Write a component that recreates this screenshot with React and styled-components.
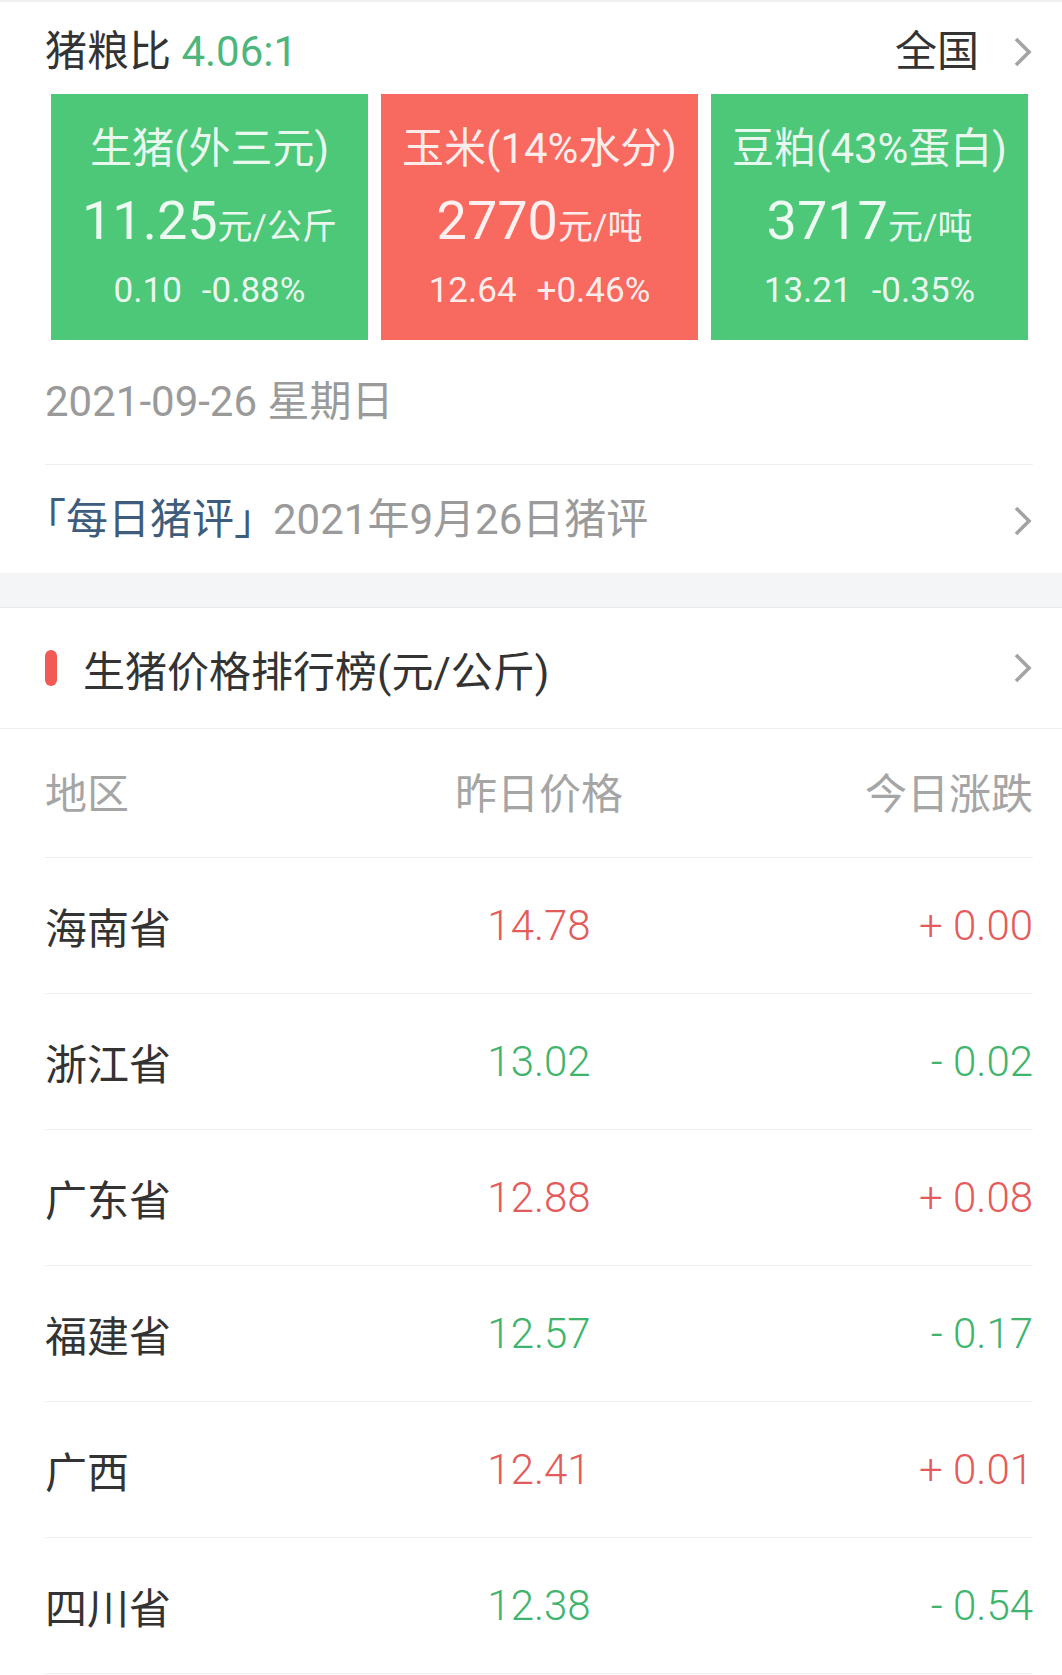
import React from 'react';
import styled, { createGlobalStyle } from 'styled-components';

const GlobalStyle = createGlobalStyle`
  body {
    margin: 0;
    background: #ffffff;
    font-family: Roboto, "Noto Sans CJK SC", sans-serif;
  }
`;

const cards = [
  { name: '生猪(外三元)', price: '11.25', unit: '元/公斤', diff: '0.10', pct: '-0.88%', tone: 'down' },
  { name: '玉米(14%水分)', price: '2770', unit: '元/吨', diff: '12.64', pct: '+0.46%', tone: 'up' },
  { name: '豆粕(43%蛋白)', price: '3717', unit: '元/吨', diff: '13.21', pct: '-0.35%', tone: 'down' },
];

const ranks = [
  { region: '海南省', price: '14.78', change: '+ 0.00', tone: 'up' },
  { region: '浙江省', price: '13.02', change: '- 0.02', tone: 'down' },
  { region: '广东省', price: '12.88', change: '+ 0.08', tone: 'up' },
  { region: '福建省', price: '12.57', change: '- 0.17', tone: 'down' },
  { region: '广西', price: '12.41', change: '+ 0.01', tone: 'up' },
  { region: '四川省', price: '12.38', change: '- 0.54', tone: 'down' },
];

const Chevron = ({ drop = 0 }) => (
  <ChevronIcon viewBox="0 0 20 32" width="20" height="32" $drop={drop}>
    <polyline points="3,3 16,16 3,29" fill="none" stroke="#a3a3a3" strokeWidth="3.6" />
  </ChevronIcon>
);

const App = () => {
  return (
    <Page>
      <GlobalStyle />
      <Summary>
        <TitleRow>
          <Title>
            猪粮比 <Ratio>4.06:1</Ratio>
          </Title>
          <RegionLink>
            全国
            <Chevron />
          </RegionLink>
        </TitleRow>

        <CardGrid>
          {cards.map((c) => (
            <PriceCard key={c.name} $tone={c.tone}>
              <CardTitle>{c.name}</CardTitle>
              <CardPrice>
                {c.price}
                <Unit>{c.unit}</Unit>
              </CardPrice>
              <CardChange>
                <span>{c.diff}</span>
                <span>{c.pct}</span>
              </CardChange>
            </PriceCard>
          ))}
        </CardGrid>

        <DateRow>2021-09-26 星期日</DateRow>

        <CommentRow>
          <span>
            <CommentTag>「每日猪评」</CommentTag>
            <CommentText>2021年9月26日猪评</CommentText>
          </span>
          <Chevron drop={12} />
        </CommentRow>
      </Summary>

      <Band />

      <RankHeader>
        <Pill />
        <RankTitle>生猪价格排行榜(元/公斤)</RankTitle>
        <Chevron />
      </RankHeader>

      <Table>
        <HeadRow>
          <Cell $align="start">地区</Cell>
          <Cell $align="center">昨日价格</Cell>
          <Cell $align="end">今日涨跌</Cell>
        </HeadRow>
        {ranks.map((r) => (
          <DataRow key={r.region}>
            <Cell $align="start">{r.region}</Cell>
            <Cell $align="center" $tone={r.tone}>{r.price}</Cell>
            <Cell $align="end" $tone={r.tone}>{r.change}</Cell>
          </DataRow>
        ))}
      </Table>
    </Page>
  );
};

// Styled Components
const Page = styled.div`
  width: 1062px;
  background: #ffffff;
  border-top: 2px solid #f0f0f0;
  overflow: hidden;
`;

const Summary = styled.section`
  padding: 0 29px 0 45px;
`;

const TitleRow = styled.div`
  display: flex;
  align-items: center;
  justify-content: space-between;
  height: 84px;
  padding-top: 8px;
`;

const Title = styled.div`
  font-size: 42px;
  line-height: 1;
  color: #333333;
`;

const Ratio = styled.span`
  color: #4db67d;
`;

const RegionLink = styled.div`
  display: flex;
  align-items: center;
  gap: 34px;
  font-size: 42px;
  line-height: 1;
  color: #333333;
`;

const ChevronIcon = styled.svg`
  display: block;
  flex-shrink: 0;
  margin-top: ${(p) => p.$drop}px;
`;

const CardGrid = styled.div`
  display: grid;
  grid-template-columns: repeat(3, 1fr);
  gap: 13px;
  height: 246px;
  margin: 0 5px 0 6px;
`;

const PriceCard = styled.div`
  display: flex;
  flex-direction: column;
  align-items: center;
  padding-top: 30px;
  background: ${(p) => (p.$tone === 'up' ? '#f86a60' : '#4cc878')};
  color: rgba(255, 255, 255, 0.9);
  white-space: nowrap;
`;

const CardTitle = styled.div`
  font-size: 42px;
  line-height: 50px;
`;

const CardPrice = styled.div`
  display: flex;
  align-items: baseline;
  margin-top: 17px;
  font-size: 54px;
  line-height: 60px;
`;

const Unit = styled.span`
  font-size: 35px;
`;

const CardChange = styled.div`
  display: flex;
  gap: 20px;
  margin-top: 13px;
  font-size: 35px;
  line-height: 40px;
`;

const DateRow = styled.div`
  display: flex;
  align-items: center;
  height: 114px;
  padding-bottom: 10px;
  font-size: 42px;
  color: #9a9a9a;
  border-bottom: 1px solid #eeeeee;
`;

const CommentRow = styled.div`
  display: flex;
  align-items: center;
  justify-content: space-between;
  height: 100px;
  padding-bottom: 8px;
  font-size: 42px;
`;

const CommentTag = styled.span`
  color: #3e5c7c;
  font-feature-settings: "halt";
  margin-right: 18px;
`;

const CommentText = styled.span`
  color: #9a9a9a;
`;

const Band = styled.div`
  height: 34px;
  background: #f4f5f7;
  border-bottom: 1px solid #eaeaea;
`;

const RankHeader = styled.div`
  display: flex;
  align-items: center;
  height: 120px;
  padding: 0 29px 0 45px;
  border-bottom: 1px solid #eeeeee;
`;

const Pill = styled.span`
  width: 12px;
  height: 36px;
  border-radius: 6px;
  background: #f15b55;
  margin-right: 26px;
`;

const RankTitle = styled.div`
  flex: 1;
  font-size: 42px;
  color: #333333;
`;

const Table = styled.div`
  padding: 0 29px 0 45px;
`;

const HeadRow = styled.div`
  display: grid;
  grid-template-columns: repeat(3, 1fr);
  align-items: center;
  height: 122px;
  padding-bottom: 6px;
  font-size: 42px;
  color: #a5a5a5;
  border-bottom: 1px solid #eeeeee;
`;

const DataRow = styled.div`
  display: grid;
  grid-template-columns: repeat(3, 1fr);
  align-items: center;
  height: 135px;
  font-size: 42px;
  color: #333333;
  border-bottom: 1px solid #f0f0f0;
`;

const Cell = styled.div`
  justify-self: ${(p) => p.$align};
  white-space: pre;
  font-weight: ${(p) => (p.$tone ? 300 : 400)};
  color: ${(p) => (p.$tone === 'up' ? '#e35b5a' : p.$tone === 'down' ? '#3fb46d' : 'inherit')};
`;

export default App;
